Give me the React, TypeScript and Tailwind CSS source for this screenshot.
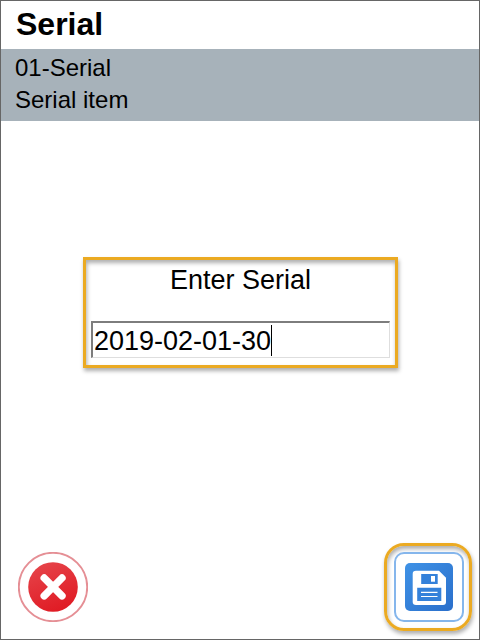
function CancelIcon() {
  return (
    <svg viewBox="0 0 70 70" className="h-[70px] w-[70px]">
      <defs>
        <linearGradient id="cancel-fill" x1="0.2" y1="0" x2="0.6" y2="1">
          <stop offset="0" stopColor="#e6444a" />
          <stop offset="1" stopColor="#e01b24" />
        </linearGradient>
      </defs>
      <circle cx="35" cy="35" r="34.2" fill="#fff" stroke="#e58f95" strokeWidth="1.9" />
      <circle cx="35" cy="35" r="24.8" fill="url(#cancel-fill)" />
      <path d="M26.2 26 44 43.800M44 26 26.200 43.800" stroke="#fff" strokeWidth="7.400" strokeLinecap="round" />
    </svg>
  );
}

function SaveIcon() {
  return (
    <svg viewBox="0 0 48 48" className="h-12 w-12">
      <defs>
        <linearGradient id="save-fill" x1="0" y1="0" x2="1" y2="1">
          <stop offset="0" stopColor="#3f92e6" />
          <stop offset="1" stopColor="#2a6fcb" />
        </linearGradient>
      </defs>
      <rect width="48" height="48" rx="5" fill="url(#save-fill)" />
      <path d="M11 7.700H34L41 14.700V39Q41 42 38 42H11Q7.700 42 7.700 39V11Q7.700 7.700 11 7.700Z" fill="#fff" />
      <path d="M16.200 11H32.700V21H16.200ZM12.200 24.800H36.300V38H12.200Z" fill="#3481da" />
      <path d="M26 13H30V18.700H26Z" fill="#fff" />
      <path d="M16 29.300H32.500M16 33.500H32.500" stroke="#fff" strokeWidth="1.200" />
    </svg>
  );
}

export default function App() {
  return (
    <div className="flex h-[640px] w-[480px] flex-col overflow-hidden border border-[#666666] bg-white font-['Liberation_Sans',Arial,sans-serif] text-black">
      <header className="h-12 shrink-0 pl-[15px] pt-[5px] text-[32px] leading-[36px] font-bold">Serial</header>
      <section className="h-[72px] shrink-0 bg-[#a7b2ba] pl-[14px] pt-[3px] text-[24px] leading-8">
        <p>01-Serial</p>
        <p>Serial item</p>
      </section>
      <main className="flex flex-1 flex-col">
        <div className="mt-[136px] ml-[82px] flex h-[111px] w-[315px] flex-col border-3 border-[#ebaa22] px-[5px] shadow-[1px_3px_4px_rgba(0,0,0,0.32),inset_1px_3px_4px_rgba(0,0,0,0.32)]">
          <label htmlFor="serial" className="mt-[4px] h-[57px] text-center text-[27px] leading-[32px]">
            Enter Serial
          </label>
          <div
            id="serial"
            className="flex h-[37px] w-[299px] items-center border-t-2 border-r border-b border-l-2 border-t-[#7d7d7d] border-r-[#dedede] border-b-[#dedede] border-l-[#7d7d7d] bg-white pl-px text-[27px] leading-[32px]"
          >
            <span className="pt-[2px]">2019-02-01-30</span>
            <span className="h-[31px] w-px bg-black" />
          </div>
        </div>
      </main>
      <footer className="flex h-[96px] shrink-0 items-start justify-between pr-[7px] pl-[17px]">
        <button aria-label="Cancel" className="mt-[9px]">
          <CancelIcon />
        </button>
        <div className="flex h-[88px] w-[88px] items-center justify-center rounded-[20px] border-3 border-[#ebaa22] pl-px shadow-[1px_3px_4px_rgba(0,0,0,0.32),inset_1px_3px_4px_rgba(0,0,0,0.32)]">
          <button
            aria-label="Save"
            className="flex h-[70px] w-[70px] shrink-0 items-center justify-center rounded-[10px] border-2 border-[#85b6ec] bg-white"
          >
            <SaveIcon />
          </button>
        </div>
      </footer>
    </div>
  );
}
